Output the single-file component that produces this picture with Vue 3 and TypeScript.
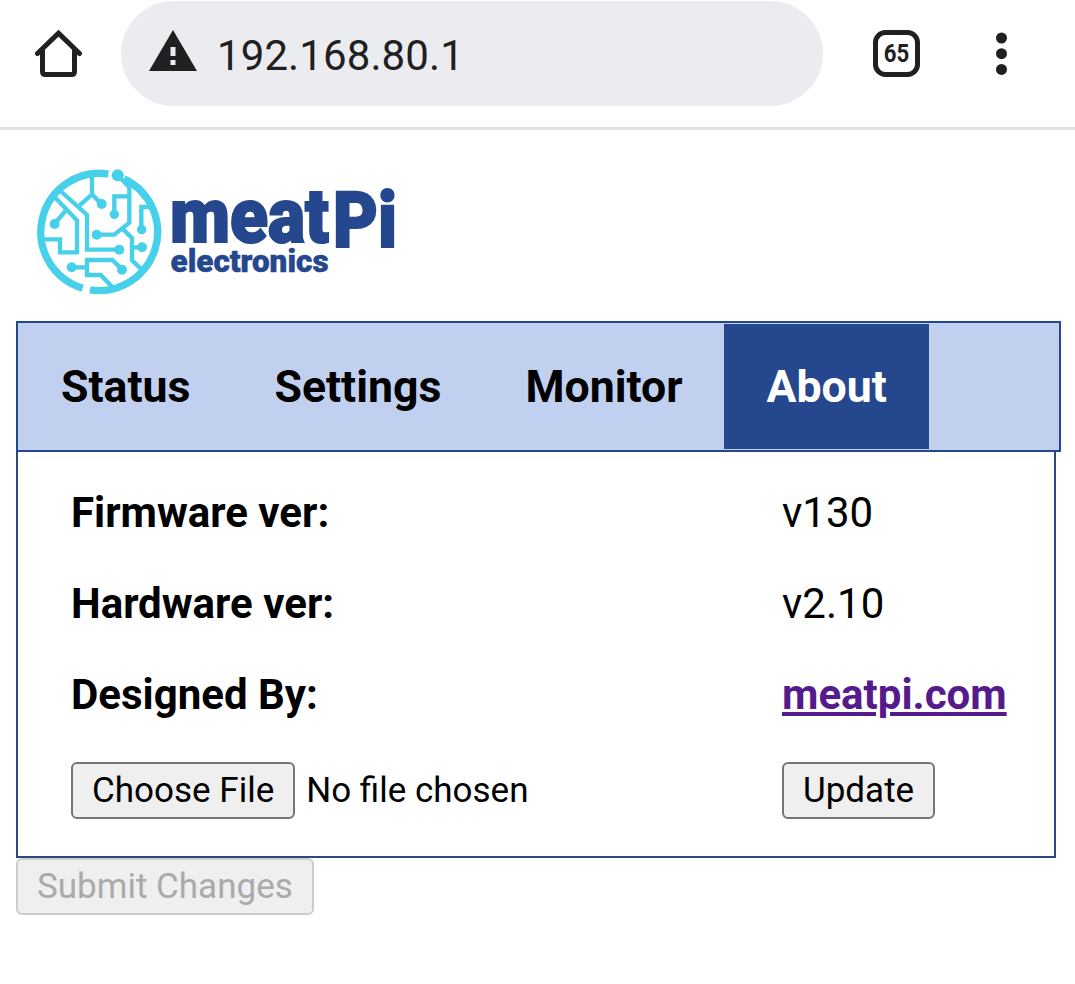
<script setup lang="ts">
import { ref } from 'vue'

const tabs: string[] = ['Status', 'Settings', 'Monitor', 'About']
const active = ref<string>('About')
</script>

<template>
  <div class="screen">
    <header class="toolbar">
      <svg class="home" viewBox="0 0 48 48" aria-label="Home">
        <path d="M7.500 20V41.500Q7.500 44.500 10.500 44.500H36.500Q39.500 44.500 39.500 41.500V20" />
        <path d="M2.500 23.500L23.500 3.200L44.500 23.500" stroke-linecap="round" />
      </svg>
      <div class="address">
        <svg class="warning" viewBox="0 0 48 41" aria-label="Not secure">
          <path d="M24 0L48 41H0Z" fill="#202020" />
          <path d="M21.500 17h5v9h-5zM21.500 30h5v5h-5z" fill="#ebecf0" />
        </svg>
        <span class="url">192.168.80.1</span>
      </div>
      <svg class="count" viewBox="0 0 47 47">
        <rect x="2.500" y="2.500" width="42" height="42" rx="10" fill="none" stroke="#202020" stroke-width="5" />
        <text x="10.700" y="32" font-size="26.500" textLength="25.500" lengthAdjust="spacingAndGlyphs">65</text>
      </svg>
      <svg class="more" viewBox="0 0 12 44" aria-label="Menu">
        <circle cx="6.500" cy="6" r="5.500" /><circle cx="6.500" cy="21.700" r="5.500" /><circle cx="6.500" cy="37.400" r="5.500" />
      </svg>
    </header>

    <main class="page">
      <svg class="logo" viewBox="0 0 375 140" role="img" aria-label="meatPi electronics">
        <g transform="scale(.33333)" fill="none" stroke="#47d0e9" stroke-width="13">
          <path d="M235 42A176 176 0 0 0 158 384.600M282 56.600A176 176 0 0 1 180 389.700" stroke-width="22" />
          <path d="M186 48V103L149 136M186 103L213 131" />
          <path d="M85 87L171 165V269H268" />
          <path d="M70 107L141 181V277H90V238H42" />
          <path d="M106 153L74 191" />
          <path d="M263 46L298 82V188L253 224H200M297 109H253V162" />
          <path d="M362 141H334V208M277 206L306 234V301L335 328M306 262H335" />
          <path d="M125 322H171M250 384L212 345H171V300H247L276 328" />
          <g fill="#47d0e9" stroke="none">
            <circle cx="263" cy="46" r="18" /><circle cx="215" cy="132" r="15" />
            <circle cx="74" cy="192" r="15" /><circle cx="253" cy="163" r="14" />
            <circle cx="200" cy="224" r="15" /><circle cx="335" cy="209" r="14" />
            <circle cx="336" cy="262" r="15" /><circle cx="268" cy="269" r="15" />
            <circle cx="125" cy="322" r="15" /><circle cx="276" cy="329" r="15" />
          </g>
        </g>
        <g class="wordmark">
          <text x="140" y="82" font-size="76" textLength="159" lengthAdjust="spacingAndGlyphs" stroke-width="2">meat</text>
          <text x="303" y="87" font-size="77" textLength="64" lengthAdjust="spacingAndGlyphs" stroke-width="2">Pi</text>
          <text x="140.500" y="111.500" font-size="32" textLength="158" lengthAdjust="spacingAndGlyphs" stroke-width=".5">electronics</text>
        </g>
      </svg>

      <nav class="tabs">
        <button
          v-for="tab in tabs"
          :key="tab"
          class="tab"
          :class="{ active: tab === active }"
          @click="active = tab"
        >{{ tab }}</button>
      </nav>

      <section class="panel">
        <b>Firmware ver:</b><span>v130</span>
        <b>Hardware ver:</b><span>v2.10</span>
        <b>Designed By:</b><a href="#">meatpi.com</a>
        <div class="file">
          <button class="control">Choose File</button>
          <span>No file chosen</span>
        </div>
        <button class="control">Update</button>
      </section>
      <button class="control submit" disabled>Submit Changes</button>
    </main>
  </div>
</template>

<style>
body {
  margin: 0;
  background: #fff;
}
</style>

<style scoped>
.screen {
  width: 1075px;
  height: 984px;
  overflow: hidden;
  background: #fff;
  color: #000;
  font-family: Roboto, sans-serif;
  font-size: 42px;
  line-height: 49px;
}
.toolbar {
  box-sizing: border-box;
  height: 130px;
  padding: 1px 0 0 35px;
  border-bottom: 3px solid #e0e1e1;
  display: flex;
  align-items: flex-start;
}
.home {
  width: 48px;
  height: 48px;
  margin-top: 29px;
  fill: none;
  stroke: #202020;
  stroke-width: 5;
}
.address {
  box-sizing: border-box;
  width: 702px;
  height: 105px;
  margin-left: 38px;
  padding-left: 28px;
  border-radius: 53px;
  background: #ebecf0;
  display: flex;
  align-items: center;
}
.warning {
  width: 48px;
  height: 41px;
  margin-bottom: 6px;
}
.url {
  margin: 4px 0 0 20px;
  color: #202020;
  letter-spacing: 0.1px;
}
.count {
  width: 47px;
  height: 47px;
  margin: 29px 0 0 50px;
}
.count text {
  font-weight: 700;
  fill: #202020;
}
.more {
  width: 12px;
  height: 44px;
  margin: 31px 0 0 75px;
  fill: #202020;
}
.page {
  padding: 30px 14px 0 16px;
}
.logo {
  display: block;
  width: 375px;
  height: 140px;
  margin: 0 0 21px 14px;
}
.wordmark {
  font-weight: 900;
  fill: #25478e;
  stroke: #25478e;
}
.tabs {
  box-sizing: border-box;
  height: 131px;
  padding: 1px;
  border: 2px solid #25478e;
  background: #c2d0ef;
  display: flex;
}
.tab {
  border: 0;
  padding: 0 42px;
  background: none;
  color: #000;
  font: 700 44.625px/52px Roboto, sans-serif;
}
.tab.active {
  background: #25478e;
  color: #fff;
}
.panel {
  box-sizing: border-box;
  width: 1040px;
  height: 406px;
  padding: 36px 0 0 53px;
  border: 2px solid #2b4980;
  border-top: 0;
  display: grid;
  grid-template-columns: 711px 1fr;
  grid-template-rows: 49px 49px 50px 57px;
  row-gap: 42px;
  justify-items: start;
}
.panel a {
  color: #551a8b;
  font-weight: 700;
  text-decoration-thickness: 4px;
  text-underline-offset: 3px;
}
.file {
  display: flex;
  align-items: center;
  gap: 11px;
  font-size: 35px;
}
.control {
  box-sizing: border-box;
  height: 57px;
  padding: 0 19px;
  border: 2px solid #767676;
  border-radius: 6px;
  background: #efefef;
  color: #000;
  font: 400 35px/41px Roboto, sans-serif;
}
.submit {
  display: block;
  border-color: #cdcdcd;
  color: #aaa;
}
</style>
